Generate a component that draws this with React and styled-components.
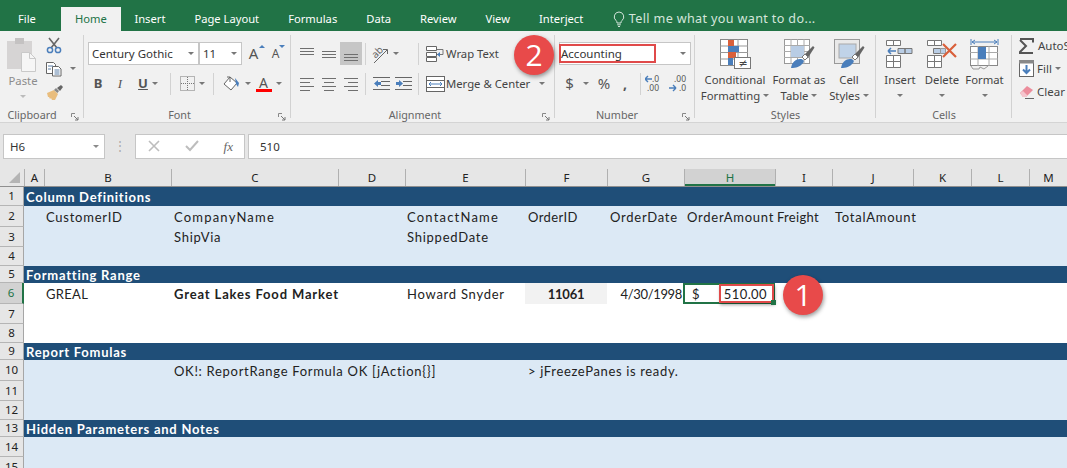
import React from 'react'
import styled, { createGlobalStyle } from 'styled-components'

const GlobalStyle = createGlobalStyle`
html, body { margin: 0; padding: 0; background: #dce9f5; }
body { width: 1067px; height: 468px; overflow: hidden; }
`

const uiFont = `"Noto Sans", "Open Sans", sans-serif`
const cellFont = `"Lato", "Liberation Sans", sans-serif`
const GRID = '24px 20px 127px 167px 67px 120px 82px 77px 91px 57px 81px 58px 58px 1fr'

const Page = styled.div`
position: relative;
width: 1067px;
height: 468px;
overflow: hidden;
font-family: ${uiFont};
`

/* tabs */
const TabBar = styled.div`
display: flex;
align-items: flex-end;
height: 31px;
background: #217346;
box-sizing: border-box;
`
const Tab = styled.div`
box-sizing: border-box;
height: 24px;
line-height: 24px;
font-size: 11.2px;
white-space: nowrap;
color: ${p => (p.$active ? '#217346' : '#fff')};
background: ${p => (p.$active ? '#f1f1f1' : 'transparent')};
width: ${p => (p.$active ? '60px' : 'auto')};
margin-right: ${p => (p.$active ? '-1px' : '0')};
text-align: center;
padding: ${p => (p.$file ? '0 25px 0 18px' : p.$active ? '0' : '0 14.5px')};
`
const TellMe = styled.div`
display: flex;
align-items: center;
gap: 4px;
height: 24px;
margin-left: 15px;
font-size: 12.6px;
letter-spacing: 0.35px;
line-height: 24px;
color: #d5e6dc;
white-space: nowrap;
`

/* ribbon */
const Ribbon = styled.div`
display: flex;
height: 92px;
background: #f1f1f1;
border-bottom: 1px solid #d4d4d4;
box-sizing: border-box;
`
const Group = styled.div`
position: relative;
flex: none;
width: ${p => p.$w}px;
display: flex;
flex-direction: column;
box-sizing: border-box;
&::after {
  content: '';
  display: ${p => (p.$last ? 'none' : 'block')};
  position: absolute;
  right: 0;
  top: 4px;
  bottom: 4px;
  width: 1px;
  background: #d2d2d2;
}
`
const GroupBody = styled.div`
flex: 1;
min-height: 0;
display: flex;
padding-left: ${p => p.$pl || 0}px;
`
const GroupLabel = styled.div`
position: relative;
height: 17px;
line-height: 20px;
font-size: 10.8px;
color: #666;
text-align: center;
padding-right: ${p => p.$pr || 0}px;
`
const Launcher = styled.svg`
position: absolute;
right: 5px;
top: 8px;
`
const Stack = styled.div`
display: flex;
flex-direction: column;
padding-top: 11px;
gap: 7px;
`
const ToolRow = styled.div`
display: flex;
align-items: center;
height: 23px;
`
const Tool = styled.div`
position: relative;
flex: none;
display: flex;
align-items: center;
justify-content: center;
gap: 4px;
width: ${p => p.$w || 22}px;
height: 23px;
background: ${p => (p.$on ? '#c6c6c6' : 'transparent')};
`
const RowSep = styled.div`
flex: none;
width: 1px;
height: 22px;
margin: 0 ${p => p.$mr ?? 5}px 0 ${p => p.$ml ?? 5}px;
background: #d2d2d2;
`
const Caret = styled.span`
flex: none;
display: inline-block;
width: 0;
height: 0;
margin: ${p => p.$m || 0};
border-left: 3.5px solid transparent;
border-right: 3.5px solid transparent;
border-top: 3.5px solid ${p => p.$c || '#777'};
`
const SizeArrow = styled.span`
position: absolute;
top: 3px;
right: ${p => p.$r}px;
width: 0;
height: 0;
border-left: 3px solid transparent;
border-right: 3px solid transparent;
border-bottom: ${p => (p.$down ? '0' : '3px solid #4a7ebb')};
border-top: ${p => (p.$down ? '3px solid #4a7ebb' : '0')};
`
const Glyph = styled.span`
font-family: ${p => p.$serif ? '"Liberation Serif", serif' : uiFont};
font-size: ${p => p.$size || 14}px;
font-weight: ${p => (p.$bold ? 700 : 400)};
font-style: ${p => (p.$italic ? 'italic' : 'normal')};
text-decoration: ${p => (p.$under ? 'underline' : 'none')};
color: ${p => p.$c || '#555'};
line-height: 1;
`
const FontColor = styled.div`
display: flex;
flex-direction: column;
align-items: center;
line-height: 1;
`
const RedBar = styled.div`
width: 16px;
height: 3px;
margin-top: -1px;
background: #f00;
`
const Combo = styled.div`
flex: none;
display: flex;
align-items: center;
justify-content: space-between;
box-sizing: border-box;
width: ${p => p.$w}px;
height: 23px;
margin-left: ${p => p.$ml || 0}px;
padding: 0 4px 0 ${p => p.$pl ?? 3}px;
background: #fff;
border: 1px solid #c6c6c6;
font-size: 11.5px;
color: #333;
white-space: nowrap;
`
const Marked = styled.span`
box-sizing: border-box;
display: block;
width: 97px;
height: 19px;
line-height: 15px;
margin-left: -2px;
padding-left: 0;
border: 2px solid #e04a4a;
`
const PasteCol = styled.div`
flex: none;
width: 46px;
display: flex;
flex-direction: column;
align-items: center;
padding-top: 7px;
font-size: 11.3px;
color: #8c8c8c;
`
const PasteLabel = styled.div`
margin-top: 1px;
line-height: 16px;
`
const ClipCol = styled.div`
display: flex;
flex-direction: column;
gap: 0;
padding-top: 3px;
`
const ClipRow = styled.div`
display: flex;
align-items: center;
gap: 8px;
height: 23px;
`
const BigBtn = styled.div`
flex: none;
width: ${p => p.$w}px;
display: flex;
flex-direction: column;
align-items: center;
padding-top: 6px;
font-size: 11.3px;
color: #444;
`
const BigIconBox = styled.div`
height: 34px;
display: flex;
align-items: center;
`
const BigLine = styled.div`
display: flex;
align-items: center;
gap: 3px;
height: 16px;
white-space: nowrap;
`
const TextBtn = styled.div`
display: flex;
align-items: center;
gap: 1px;
font-size: 11.3px;
color: #444;
white-space: nowrap;
`
const EditCol = styled.div`
display: flex;
flex-direction: column;
gap: 2px;
padding: 4px 0 0 7px;
`
const EditRow = styled.div`
display: flex;
align-items: center;
gap: 3px;
height: 21px;
font-size: 11.5px;
color: #444;
white-space: nowrap;
`

/* formula bar */
const FormulaBar = styled.div`
display: flex;
align-items: center;
height: 46px;
padding: 0 0 0 3px;
box-sizing: border-box;
background: #e6e6e6;
`
const NameBox = styled.div`
box-sizing: border-box;
flex: none;
display: flex;
align-items: center;
justify-content: space-between;
width: 102px;
height: 25px;
padding: 0 5px 0 6px;
background: #fff;
border: 1px solid #c6c6c6;
font-size: 11.5px;
color: #333;
`
const Dots = styled.div`
flex: none;
width: 30px;
text-align: center;
font-size: 12px;
line-height: 12px;
color: #aaa;
`
const FxBox = styled.div`
box-sizing: border-box;
flex: none;
display: flex;
align-items: center;
justify-content: space-between;
width: 110px;
height: 25px;
margin-right: 3px;
padding: 0 11px 0 12px;
background: #fff;
border: 1px solid #c6c6c6;
`
const FormulaInput = styled.div`
box-sizing: border-box;
flex: 1;
height: 25px;
line-height: 23px;
padding-left: 11px;
background: #fff;
border-top: 1px solid #c6c6c6;
border-bottom: 1px solid #c6c6c6;
border-left: 1px solid #c6c6c6;
font-size: 11.5px;
color: #333;
`

/* sheet */
const ColHeads = styled.div`
display: grid;
grid-template-columns: ${GRID};
height: 18px;
background: #e6e6e6;
border-bottom: 1px solid #8f8f8f;
box-sizing: border-box;
`
const Corner = styled.div`
display: flex;
align-items: flex-end;
justify-content: flex-end;
padding: 0 4px 3px 0;
`
const ColHead = styled.div`
text-align: center;
line-height: 17px;
font-size: 11.5px;
color: ${p => (p.$on ? '#217346' : '#222')};
background: ${p => (p.$on ? '#d2d2d2' : 'transparent')};
border-left: 1px solid #b0b0b0;
box-shadow: ${p => (p.$on ? 'inset 0 -2px 0 #217346' : 'none')};
box-sizing: border-box;
`
const Row = styled.div`
display: grid;
grid-template-columns: ${GRID};
height: ${p => p.$h}px;
background: ${p => (p.$tone === 'band' ? '#1f4e78' : p.$tone === 'white' ? '#fff' : '#dce9f5')};
`
const RowHead = styled.div`
grid-column: 1;
grid-row: 1;
box-sizing: border-box;
text-align: center;
font-size: 11.5px;
line-height: ${p => p.$h - 1}px;
color: ${p => (p.$on ? '#217346' : '#222')};
background: ${p => (p.$on ? '#d2d2d2' : '#e6e6e6')};
border-bottom: 1px solid #b5b5b5;
border-right: ${p => (p.$on ? '2px solid #217346' : '1px solid #a6a6a6')};
`
const BandTitle = styled.div`
grid-column: 2 / -1;
grid-row: 1;
padding-left: 2px;
font-family: ${cellFont};
font-size: 13px;
font-weight: 700;
color: #fff;
white-space: nowrap;
display: flex;
align-items: center;
letter-spacing: 0.75px;
`
const Cell = styled.div`
grid-column: ${p => p.$col};
grid-row: 1;
min-width: 0;
display: flex;
align-items: center;
justify-content: ${p => (p.$right ? 'flex-end' : p.$center ? 'center' : 'flex-start')};
box-sizing: border-box;
padding: 0 ${p => (p.$right ? 2 : 0)}px 0 ${p => p.$pl ?? 3}px;
font-family: ${cellFont};
font-size: 13px;
font-weight: ${p => (p.$bold ? 700 : 400)};
letter-spacing: ${p => p.$ls ?? 0.75}px;
color: #222;
white-space: nowrap;
background: ${p => p.$fill || 'transparent'};
`
const ActiveCell = styled.div`
grid-column: 9;
grid-row: 1;
position: relative;
box-sizing: border-box;
margin-left: -1px;
display: flex;
align-items: center;
padding: 0 0 0 7px;
border: 2px solid #217346;
font-family: ${cellFont};
font-size: 13px;
color: #222;
`
const FillHandle = styled.div`
position: absolute;
right: -3px;
bottom: -3px;
width: 5px;
height: 5px;
background: #217346;
`
const AmountBox = styled.div`
position: absolute;
right: -1px;
top: -1px;
bottom: -1px;
width: 55px;
box-sizing: border-box;
display: flex;
align-items: center;
justify-content: flex-end;
padding-right: 5px;
border: 2px solid #e04a4a;
box-shadow: 1px 2px 3px rgba(0, 0, 0, 0.35);
background: #fff;
letter-spacing: 0.4px;
`
const Callout = styled.div`
position: absolute;
left: ${p => p.$x - 20}px;
top: ${p => p.$y - 20}px;
width: 40px;
height: 40px;
border-radius: 50%;
background: #e84a4a;
box-shadow: 1px 2px 4px rgba(0, 0, 0, 0.4);
color: #fff;
font-family: "Open Sans", sans-serif;
font-size: 30px;
line-height: 39px;
text-align: center;
`

/* icons */
const g = '#6f6f6f'
const blue = '#4a7ebb'
const red = '#d9603b'

const Lines = ({ rows, w = 16, h = 16, color = g }) => (
  <svg width={w} height={h}>
    {rows.map(([x1, x2, y], i) => (
      <line key={i} x1={x1} x2={x2} y1={y + 0.5} y2={y + 0.5} stroke={color} />
    ))}
  </svg>
)

const PasteIcon = () => (
  <svg width="32" height="34">
    <rect x="0" y="3" width="25" height="28" fill="#d6d4d4" />
    <rect x="8" y="0" width="9" height="6" fill="#c4c2c2" />
    <path d="M14.5 14.5h8l6 6v13h-14z" fill="#f6f6f6" stroke="#c9c9c9" />
    <path d="M22.5 14.5v6h6" fill="none" stroke="#c9c9c9" />
  </svg>
)
const ScissorsIcon = () => (
  <svg width="16" height="17">
    <path d="M3 1l8 10M13 1L5 11" stroke="#666" strokeWidth="1.6" fill="none" />
    <circle cx="4" cy="13" r="2.6" fill="none" stroke={blue} strokeWidth="1.5" />
    <circle cx="12" cy="13" r="2.6" fill="none" stroke={blue} strokeWidth="1.5" />
  </svg>
)
const CopyIcon = () => (
  <svg width="16" height="16">
    <path d="M.5 1.5h7l2 2v9h-9z" fill="#fff" stroke="#666" />
    <path d="M6.5 5.5h6l2.500 2.500v7h-8.500z" fill="#fff" stroke="#666" />
    <path d="M2 5h5M2 8h3M8.500 9h5M8.500 11h5M8.500 13h5" stroke="#5a7fa8" />
  </svg>
)
const BrushIcon = () => (
  <svg width="18" height="16">
    <path d="M1 9l7-3 4 4-3 6H6l-1-2-1 1-1-2-1 0z" fill="#e9bd7d" />
    <path d="M8 6l2-2 3 3-1.500 2z" fill="#888" />
    <path d="M11 4l4-3 2 2-3 4z" fill="#666" />
  </svg>
)
const Launch = () => (
  <Launcher width="8" height="8">
    <path d="M.5 4V.5H4" fill="none" stroke="#888" />
    <path d="M3 3l4 4M7 4v3H4" fill="none" stroke="#777" />
  </Launcher>
)
const BorderIcon = () => (
  <svg width="15" height="15">
    <rect x=".5" y=".5" width="14" height="14" fill="none" stroke="#777" strokeDasharray="1 1" />
    <path d="M7.500 1v13M1 7.500h13" stroke="#777" strokeDasharray="1 1" />
  </svg>
)
const FillIcon = () => (
  <svg width="19" height="16">
    <path d="M8 1l7 6-6 7-7-6z" fill="#fff" stroke="#666" />
    <path d="M5 1h3v5" fill="none" stroke="#666" />
    <path d="M13 2l4 5-1 4-2-3z" fill={blue} />
  </svg>
)
const OrientIcon = () => (
  <svg width="20" height="20">
    <text x="3" y="12" fontSize="10" fill="#666" fontFamily="Noto Sans" transform="rotate(-45 8 9)">ab</text>
    <path d="M5 19L18 6M14 5.500h4.500V10" fill="none" stroke="#666" />
  </svg>
)
const IndentIcon = ({ dir }) => (
  <svg width="17" height="13">
    <path d="M8 .5h9M8 4.500h9M8 8.500h9M0 12.500h17M0 .5h17" stroke="#666" />
    {dir === 'left'
      ? <path d="M1 6.500l4-3.500v2h3v3H5v2z" fill={blue} />
      : <path d="M8 6.500L4 3v2H1v3h3v2z" fill={blue} />}
  </svg>
)
const WrapIcon = () => (
  <svg width="19" height="16">
    <path d="M.5.5h10v4H.5zM.5 6.500h10v4H.5zM.5 11.500h10v4H.5z" fill="#fff" stroke="#666" />
    <path d="M11 3.500h6v5h-6" fill="none" stroke="#777" />
    <path d="M11 8.500l3-2.500v5z" fill={blue} />
  </svg>
)
const MergeIcon = () => (
  <svg width="19" height="16">
    <rect x=".5" y=".5" width="18" height="15" fill="#fff" stroke="#666" />
    <path d="M0 4.500h19M0 11.500h19" stroke="#666" />
    <path d="M3 8h13M3 8l2-2M3 8l2 2M16 8l-2-2M16 8l-2 2" stroke={blue} fill="none" />
  </svg>
)
const DecimalIcon = ({ more }) => (
  <svg width="20" height="19" fontFamily="Noto Sans" fontSize="8.500" fill="#555">
    <text x={more ? 5 : 7} y="8">{more ? '.00' : '.0'}</text>
    <text x={more ? 10 : 2} y="17">{more ? '.0' : '.00'}</text>
    {more
      ? <path d="M0 14h7M7 14l-3-3M7 14l-3 3" stroke={blue} fill="none" strokeWidth="1.400" />
      : <path d="M0 5h7M0 5l3-3M0 5l3 3" stroke={blue} fill="none" strokeWidth="1.400" />}
  </svg>
)
const CondIcon = () => (
  <svg width="31" height="30">
    <rect x=".5" y=".5" width="27" height="26" fill="#fff" stroke="#888" />
    <path d="M9 0v27M18 0v27M0 7h28M0 13.500h28M0 20h28" stroke="#999" />
    <rect x="8" y="1" width="6" height="6" fill={red} />
    <rect x="8" y="7" width="11" height="6" fill={blue} />
    <rect x="8" y="13" width="8" height="6" fill={red} />
    <rect x="8" y="19" width="5" height="7" fill={blue} />
    <rect x="14.500" y="18.500" width="16" height="11" fill="#fff" stroke="#777" />
    <text x="18.500" y="27.500" fontSize="11" fill="#444" fontFamily="DejaVu Sans">≠</text>
  </svg>
)
const TableBrushIcon = ({ plain }) => (
  <svg width="31" height="30">
    <rect x=".5" y=".5" width="25" height="24" fill={plain ? '#e9e9e9' : '#fff'} stroke="#999" />
    {plain
      ? <rect x="5" y="5" width="17" height="14" fill="#c0d3e8" stroke="#aaa" />
      : <path d="M7 0v25M13.500 0v25M20 0v25M0 6.500h26M0 12.500h26M0 18.500h26" stroke="#aaa" />}
    {!plain && <rect x="7" y="7" width="13" height="11" fill="#b9cde5" />}
    <path d="M20 16l9-9 1.500 1.500-7 11z" fill="#666" />
    <path d="M7 29c1-6 5-9 9-9 3 0 5 2 3 4-3 4-7 5-12 5z" fill={blue} />
    <path d="M18 18l3-3 3 3-3 3z" fill="#fff" stroke="#777" />
  </svg>
)
const InsertIcon = () => (
  <svg width="28" height="30">
    <path d="M.5 1.500h7v5h-7zM7.500 1.500h7v5h-7zM.5 16.500h7v6h-7zM7.500 16.500h7v6h-7zM.5 22.500h7v6h-7zM7.500 22.500h7v6h-7z" fill="#fff" stroke="#777" />
    <path d="M12 9.500h7v5h-7zM19 9.500h7v5h-7z" fill="#b9cde5" stroke="#777" />
    <path d="M2 12h8M2 12l3-3M2 12l3 3" stroke={blue} strokeWidth="1.500" fill="none" />
  </svg>
)
const DeleteIcon = () => (
  <svg width="31" height="30">
    <path d="M.5 1.500h7v5h-7zM7.500 1.500h7v5h-7zM.5 16.500h7v6h-7zM7.500 16.500h7v6h-7zM.5 22.500h7v6h-7zM7.500 22.500h7v6h-7z" fill="#fff" stroke="#777" />
    <path d="M6.500 9.500h7v5h-7z" fill="#b9cde5" stroke="#777" />
    <path d="M13.500 9.500h5v5h-5z" fill="#b9cde5" stroke="#999" />
    <path d="M16 5l13 13M29 5L16 18" stroke={red} strokeWidth="2.200" />
  </svg>
)
const FormatIcon = () => (
  <svg width="29" height="31">
    <path d="M1 0v6M28 0v6" stroke={blue} />
    <path d="M2 3h25M2 3l3-2M2 3l3 2M27 3l-3-2M27 3l-3 2" stroke={blue} fill="none" />
    <rect x=".5" y="7.500" width="27" height="19" fill="#fff" stroke="#888" />
    <path d="M8 7v20M19 7v20M0 13.500h28M0 20h28" stroke="#aaa" />
    <rect x="8" y="8" width="8" height="12" fill={blue} />
    <path d="M1 27l2 3h6l1-2 4 2 4-3" fill="none" stroke="#999" />
  </svg>
)
const SigmaIcon = () => (
  <svg width="16" height="16">
    <path d="M1 1h13v3.500M14 15H1v-1l6-6-6-6" fill="none" stroke="#555" strokeWidth="2" />
  </svg>
)
const DownFillIcon = () => (
  <svg width="15" height="17">
    <rect x=".5" y=".5" width="14" height="16" fill="#fff" stroke="#666" />
    <rect x="0" y="0" width="15" height="3.500" fill="#888" />
    <path d="M7.500 5v8M4 9.500l3.500 3.500 3.500-3.500" fill="none" stroke={blue} strokeWidth="2" />
  </svg>
)
const EraserIcon = () => (
  <svg width="15" height="14">
    <path d="M1 8l7-7 6 4-7 7H4z" fill="#ec8d9c" />
    <path d="M1 8l3 4h3l1.500-1.500L4 6z" fill="#f5c5cd" />
    <path d="M6 13.500h9" stroke="#666" />
  </svg>
)
const BulbIcon = () => (
  <svg width="12" height="16">
    <path d="M6 1a4.800 4.800 0 0 0-3 8.500c.8.7 1 1.500 1 2.500h4c0-1 .2-1.800 1-2.500A4.800 4.800 0 0 0 6 1zM4.200 13.800h3.600M5 15.500h2" fill="none" stroke="#d5e6dc" />
  </svg>
)
const Triangle = () => (
  <svg width="11" height="11"><path d="M11 0v11H0z" fill="#b4b4b4" /></svg>
)
const CrossIcon = () => (
  <svg width="12" height="12"><path d="M1 1l10 10M11 1L1 11" stroke="#bdbdbd" strokeWidth="1.600" /></svg>
)
const CheckIcon = () => (
  <svg width="14" height="12"><path d="M1 6l4 4 8-9" fill="none" stroke="#bdbdbd" strokeWidth="2" /></svg>
)

const columns = ['A', 'B', 'C', 'D', 'E', 'F', 'G', 'H', 'I', 'J', 'K', 'L', 'M']
const tabs = ['Insert', 'Page Layout', 'Formulas', 'Data', 'Review', 'View', 'Interject']

const Band = ({ n, h, children }) => (
  <Row $h={h} $tone="band">
    <RowHead $h={h}>{n}</RowHead>
    <BandTitle>{children}</BandTitle>
  </Row>
)
const Plain = ({ n, h, tone, on, children }) => (
  <Row $h={h} $tone={tone}>
    <RowHead $h={h} $on={on}>{n}</RowHead>
    {children}
  </Row>
)

export default function App() {
  return (
    <Page>
      <GlobalStyle />
      <TabBar>
        <Tab $file>File</Tab>
        <Tab $active>Home</Tab>
        {tabs.map(t => <Tab key={t}>{t}</Tab>)}
        <TellMe><BulbIcon />Tell me what you want to do...</TellMe>
      </TabBar>

      <Ribbon>
        <Group $w={84}>
          <GroupBody>
            <PasteCol>
              <PasteIcon />
              <PasteLabel>Paste</PasteLabel>
              <Caret $c="#bbb" $m="6px 0 0" />
            </PasteCol>
            <ClipCol>
              <ClipRow><ScissorsIcon /></ClipRow>
              <ClipRow><CopyIcon /><Caret $c="#777" /></ClipRow>
              <ClipRow><BrushIcon /></ClipRow>
            </ClipCol>
          </GroupBody>
          <GroupLabel $pr={20}>Clipboard<Launch /></GroupLabel>
        </Group>

        <Group $w={207}>
          <GroupBody $pl={3}>
            <Stack>
              <ToolRow>
                <Combo $w={111} $ml={1}>Century Gothic<Caret /></Combo>
                <Combo $w={43}>11<Caret /></Combo>
                <Tool $w={23}><Glyph $size={15}>A</Glyph><SizeArrow $r={0} /></Tool>
                <Tool $w={21}><Glyph $size={12}>A</Glyph><SizeArrow $r={1} $down /></Tool>
              </ToolRow>
              <ToolRow>
                <Tool><Glyph $bold $size={13}>B</Glyph></Tool>
                <Tool><Glyph $italic $size={13} $serif>I</Glyph></Tool>
                <Tool $w={34}><Glyph $under $bold $size={13}>U</Glyph><Caret /></Tool>
                <RowSep />
                <Tool $w={32}><BorderIcon /><Caret /></Tool>
                <RowSep />
                <Tool $w={34}><FillIcon /><Caret /></Tool>
                <Tool $w={31}>
                  <FontColor><Glyph $size={14}>A</Glyph><RedBar /></FontColor>
                  <Caret />
                </Tool>
              </ToolRow>
            </Stack>
          </GroupBody>
          <GroupLabel $pr={16}>Font<Launch /></GroupLabel>
        </Group>

        <Group $w={264}>
          <GroupBody $pl={5}>
            <Stack>
              <ToolRow>
                <Tool><Lines rows={[[1, 15, 2], [1, 15, 5], [1, 15, 8]]} /></Tool>
                <Tool><Lines rows={[[1, 15, 5], [1, 15, 8], [1, 15, 11]]} /></Tool>
                <Tool $on><Lines rows={[[1, 15, 8], [1, 15, 11], [1, 15, 14]]} /></Tool>
                <RowSep $ml={3} $mr={3} />
                <Tool $w={30}><OrientIcon /><Caret $m="0 0 0 1px" /></Tool>
                <RowSep $ml={19} $mr={7} />
                <TextBtn><WrapIcon />Wrap Text</TextBtn>
              </ToolRow>
              <ToolRow>
                <Tool><Lines rows={[[1, 15, 2], [1, 11, 6], [1, 15, 10], [1, 11, 14]]} /></Tool>
                <Tool><Lines rows={[[1, 15, 2], [3, 13, 6], [1, 15, 10], [3, 13, 14]]} /></Tool>
                <Tool><Lines rows={[[1, 15, 2], [5, 15, 6], [1, 15, 10], [5, 15, 14]]} /></Tool>
                <RowSep $ml={3} $mr={4} />
                <Tool $w={22}><IndentIcon dir="left" /></Tool>
                <Tool $w={22}><IndentIcon dir="right" /></Tool>
                <RowSep $ml={4} $mr={7} />
                <TextBtn><MergeIcon />Merge &amp; Center<Caret $m="0 0 0 8px" /></TextBtn>
              </ToolRow>
            </Stack>
          </GroupBody>
          <GroupLabel $pr={16}>Alignment<Launch /></GroupLabel>
        </Group>

        <Group $w={140}>
          <GroupBody $pl={4}>
            <Stack>
              <Combo $w={132} $pl={1}><Marked>Accounting</Marked><Caret /></Combo>
              <ToolRow>
                <Tool $w={36}><Glyph $size={15}>$</Glyph><Caret $m="0 0 0 5px" /></Tool>
                <Tool $w={18}><Glyph $size={15}>%</Glyph></Tool>
                <Tool $w={24}><Glyph $bold $size={14}>,</Glyph></Tool>
                <RowSep $ml={3} $mr={3} />
                <Tool $w={22}><DecimalIcon /></Tool>
                <Tool $w={25}><DecimalIcon more /></Tool>
              </ToolRow>
            </Stack>
          </GroupBody>
          <GroupLabel $pr={16}>Number<Launch /></GroupLabel>
        </Group>

        <Group $w={181}>
          <GroupBody>
            <BigBtn $w={80}>
              <BigIconBox><CondIcon /></BigIconBox>
              <BigLine>Conditional</BigLine>
              <BigLine>Formatting<Caret /></BigLine>
            </BigBtn>
            <BigBtn $w={48}>
              <BigIconBox><TableBrushIcon /></BigIconBox>
              <BigLine>Format as</BigLine>
              <BigLine>Table<Caret /></BigLine>
            </BigBtn>
            <BigBtn $w={52}>
              <BigIconBox><TableBrushIcon plain /></BigIconBox>
              <BigLine>Cell</BigLine>
              <BigLine>Styles<Caret /></BigLine>
            </BigBtn>
          </GroupBody>
          <GroupLabel>Styles</GroupLabel>
        </Group>

        <Group $w={136}>
          <GroupBody $pl={3}>
            <BigBtn $w={42}>
              <BigIconBox><InsertIcon /></BigIconBox>
              <BigLine>Insert</BigLine>
              <BigLine><Caret /></BigLine>
            </BigBtn>
            <BigBtn $w={42}>
              <BigIconBox><DeleteIcon /></BigIconBox>
              <BigLine>Delete</BigLine>
              <BigLine><Caret /></BigLine>
            </BigBtn>
            <BigBtn $w={43}>
              <BigIconBox><FormatIcon /></BigIconBox>
              <BigLine>Format</BigLine>
              <BigLine><Caret /></BigLine>
            </BigBtn>
          </GroupBody>
          <GroupLabel>Cells</GroupLabel>
        </Group>

        <Group $w={55} $last>
          <GroupBody>
            <EditCol>
              <EditRow><SigmaIcon />AutoSum</EditRow>
              <EditRow><DownFillIcon />Fill<Caret /></EditRow>
              <EditRow><EraserIcon />Clear</EditRow>
            </EditCol>
          </GroupBody>
        </Group>
      </Ribbon>

      <FormulaBar>
        <NameBox>H6<Caret $c="#8a8a8a" /></NameBox>
        <Dots>⋮</Dots>
        <FxBox>
          <CrossIcon />
          <CheckIcon />
          <Glyph $serif $italic $size={13} $c="#666">fx</Glyph>
        </FxBox>
        <FormulaInput>510</FormulaInput>
      </FormulaBar>

      <ColHeads>
        <Corner><Triangle /></Corner>
        {columns.map(c => <ColHead key={c} $on={c === 'H'}>{c}</ColHead>)}
      </ColHeads>

      <Band n={1} h={19}>Column Definitions</Band>
      <Plain n={2} h={21}>
        <Cell $col={3} $pl={2}>CustomerID</Cell>
        <Cell $col={4} $ls={1.2}>CompanyName</Cell>
        <Cell $col={6} $pl={2} $ls={1.2}>ContactName</Cell>
        <Cell $col={7} $ls={0.4}>OrderID</Cell>
        <Cell $col={8}>OrderDate</Cell>
        <Cell $col={9}>OrderAmount</Cell>
        <Cell $col={10} $pl={2} $ls={0.3}>Freight</Cell>
        <Cell $col={11}>TotalAmount</Cell>
      </Plain>
      <Plain n={3} h={20}>
        <Cell $col={4}>ShipVia</Cell>
        <Cell $col={6} $pl={2}>ShippedDate</Cell>
      </Plain>
      <Plain n={4} h={19} />
      <Band n={5} h={17}>Formatting Range</Band>
      <Plain n={6} h={21} tone="white" on>
        <Cell $col={3} $pl={2} $ls={0.3}>GREAL</Cell>
        <Cell $col={4} $bold $ls={0.85}>Great Lakes Food Market</Cell>
        <Cell $col={6} $pl={2}>Howard Snyder</Cell>
        <Cell $col={7} $center $bold $pl={0} $ls={-0.2} $fill="#f2f2f2">11061</Cell>
        <Cell $col={8} $right $ls={-0.35}>4/30/1998</Cell>
        <ActiveCell>
          $
          <AmountBox>510.00</AmountBox>
          <FillHandle />
        </ActiveCell>
      </Plain>
      <Plain n={7} h={20} tone="white" />
      <Plain n={8} h={19} tone="white" />
      <Band n={9} h={17}>Report Fomulas</Band>
      <Plain n={10} h={21}>
        <Cell $col={4} $ls={0.7}>OK!: ReportRange Formula OK [jAction{'{}'}]</Cell>
        <Cell $col={7} $ls={0.65}>&gt; jFreezePanes is ready.</Cell>
      </Plain>
      <Plain n={11} h={20} />
      <Plain n={12} h={19} />
      <Band n={13} h={17}>Hidden Parameters and Notes</Band>
      <Plain n={14} h={20} />
      <Plain n={15} h={20} />

      <Callout $x={534} $y={55}>2</Callout>
      <Callout $x={803} $y={295}>1</Callout>
    </Page>
  )
}
